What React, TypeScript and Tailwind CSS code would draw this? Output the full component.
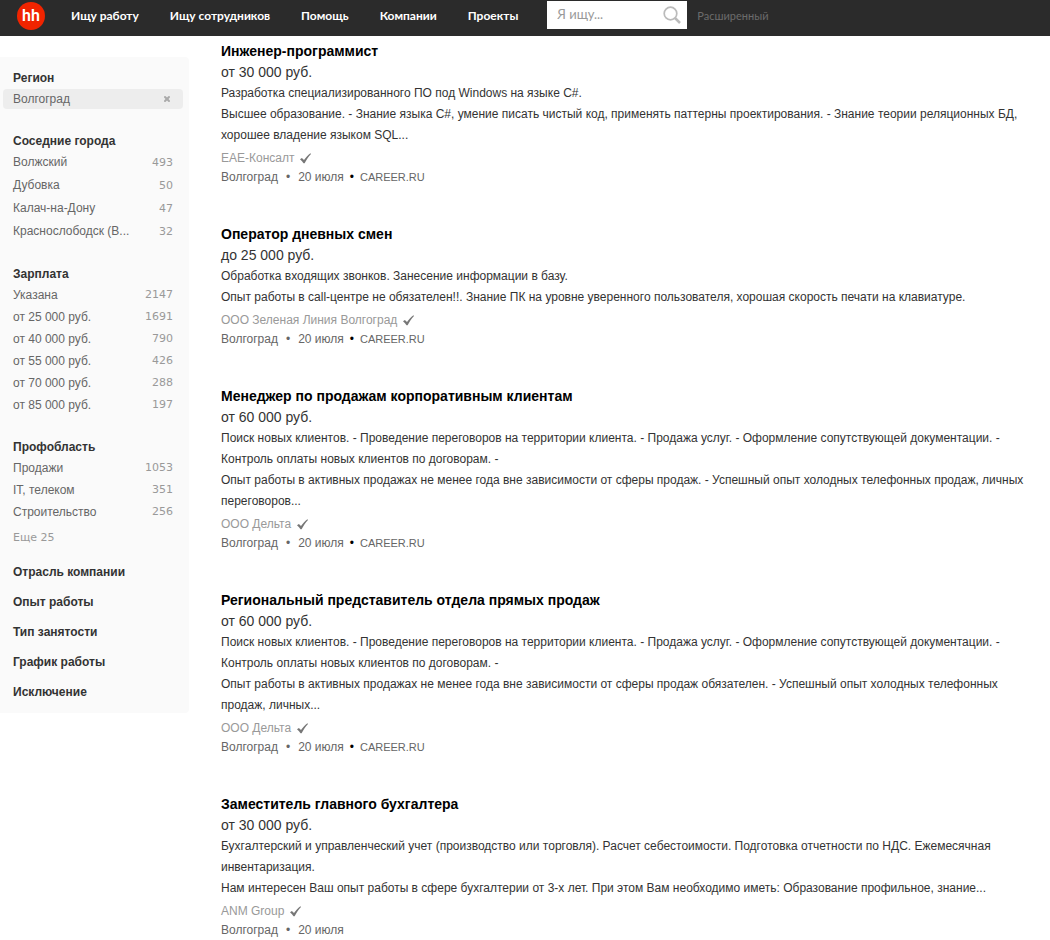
import { X } from "lucide-react";

type FilterRow = { label: string; count: number };

type Vacancy = {
  title: string;
  salary: string;
  duties: string;
  requirements: string;
  company: string;
  source?: string;
};

const navigation = [
  "Ищу работу",
  "Ищу сотрудников",
  "Помощь",
  "Компании",
  "Проекты",
];

const cities: FilterRow[] = [
  { label: "Волжский", count: 493 },
  { label: "Дубовка", count: 50 },
  { label: "Калач-на-Дону", count: 47 },
  { label: "Краснослободск (В...", count: 32 },
];

const salaries: FilterRow[] = [
  { label: "Указана", count: 2147 },
  { label: "от 25 000 руб.", count: 1691 },
  { label: "от 40 000 руб.", count: 790 },
  { label: "от 55 000 руб.", count: 426 },
  { label: "от 70 000 руб.", count: 288 },
  { label: "от 85 000 руб.", count: 197 },
];

const areas: FilterRow[] = [
  { label: "Продажи", count: 1053 },
  { label: "IT, телеком", count: 351 },
  { label: "Строительство", count: 256 },
];

const collapsed = [
  "Отрасль компании",
  "Опыт работы",
  "Тип занятости",
  "График работы",
  "Исключение",
];

const vacancies: Vacancy[] = [
  {
    title: "Инженер-программист",
    salary: "от 30 000 руб.",
    duties: "Разработка специализированного ПО под Windows на языке C#.",
    requirements:
      "Высшее образование. - Знание языка C#, умение писать чистый код, применять паттерны проектирования. - Знание теории реляционных БД, хорошее владение языком SQL...",
    company: "ЕАЕ-Консалт",
    source: "CAREER.RU",
  },
  {
    title: "Оператор дневных смен",
    salary: "до 25 000 руб.",
    duties: "Обработка входящих звонков. Занесение информации в базу.",
    requirements:
      "Опыт работы в call-центре не обязателен!!. Знание ПК на уровне уверенного пользователя, хорошая скорость печати на клавиатуре.",
    company: "ООО Зеленая Линия Волгоград",
    source: "CAREER.RU",
  },
  {
    title: "Менеджер по продажам корпоративным клиентам",
    salary: "от 60 000 руб.",
    duties:
      "Поиск новых клиентов. - Проведение переговоров на территории клиента. - Продажа услуг. - Оформление сопутствующей документации. - Контроль оплаты новых клиентов по договорам. -",
    requirements:
      "Опыт работы в активных продажах не менее года вне зависимости от сферы продаж. - Успешный опыт холодных телефонных продаж, личных переговоров...",
    company: "ООО Дельта",
    source: "CAREER.RU",
  },
  {
    title: "Региональный представитель отдела прямых продаж",
    salary: "от 60 000 руб.",
    duties:
      "Поиск новых клиентов. - Проведение переговоров на территории клиента. - Продажа услуг. - Оформление сопутствующей документации. - Контроль оплаты новых клиентов по договорам. -",
    requirements:
      "Опыт работы в активных продажах не менее года вне зависимости от сферы продаж обязателен. - Успешный опыт холодных телефонных продаж, личных...",
    company: "ООО Дельта",
    source: "CAREER.RU",
  },
  {
    title: "Заместитель главного бухгалтера",
    salary: "от 30 000 руб.",
    duties:
      "Бухгалтерский и управленческий учет (производство или торговля). Расчет себестоимости. Подготовка отчетности по НДС. Ежемесячная инвентаризация.",
    requirements:
      "Нам интересен Ваш опыт работы в сфере бухгалтерии от 3-х лет. При этом Вам необходимо иметь: Образование профильное, знание...",
    company: "ANM Group",
  },
];

function Header() {
  return (
    <header className="flex h-9 items-start bg-[#2b2b2b] pl-[17px] font-[Lato,sans-serif]">
      <a
        href="#"
        className="mt-0.5 mr-[26px] flex size-7 items-center justify-center rounded-full bg-[#f02400] font-[Roboto,sans-serif] text-base leading-7 font-semibold text-white"
      >
        hh
      </a>
      <nav className="mr-[29px] flex gap-[31px] text-xs leading-8 font-bold whitespace-nowrap text-white">
        {navigation.map((item) => (
          <a key={item} href="#">
            {item}
          </a>
        ))}
      </nav>
      <form className="mt-px flex h-7 w-[140px] items-center bg-white pr-1.5 pl-2.5">
        <input
          type="text"
          aria-label="Поиск"
          placeholder="Я ищу..."
          className="w-full min-w-0 text-[13px] outline-none placeholder:text-[#999]"
        />
        <button type="submit" aria-label="Найти">
          <svg
            viewBox="0 0 18 18"
            className="size-[18px] fill-none stroke-[#bbb]"
          >
            <circle cx="7.500" cy="7.500" r="6.300" strokeWidth="1.700" />
            <path d="M12 12 17 17" strokeWidth="2.500" />
          </svg>
        </button>
      </form>
      <a href="#" className="ml-2.5 text-[11px] leading-8 text-[#6b6b6b]">
        Расширенный
      </a>
    </header>
  );
}

function Heading({ children }: { children: string }) {
  return (
    <h3 className="px-2.5 leading-5 font-bold text-[#333]">{children}</h3>
  );
}

function Row({ label, count }: FilterRow) {
  return (
    <a href="#" className="flex justify-between px-2.5">
      <span>{label}</span>
      <span className="font-['DejaVu_Sans',sans-serif] text-[11px] text-[#999]">
        {count}
      </span>
    </a>
  );
}

function Sidebar() {
  return (
    <aside className="mt-[21px] w-[189px] shrink-0 rounded-r bg-[#fafafa] pt-[11px] pr-1.5 pb-1.5 pl-[3px] text-[#666]">
      <section className="mb-[22px]">
        <Heading>Регион</Heading>
        <div className="mt-px flex h-5 items-center justify-between rounded-sm bg-[#ededed] px-2.5">
          <span>Волгоград</span>
          <button type="button" aria-label="Убрать" className="mr-0.5 text-[#aaa]">
            <X size={8} strokeWidth={6} />
          </button>
        </div>
      </section>
      <section className="mb-[21px] leading-[23px]">
        <Heading>Соседние города</Heading>
        {cities.map((row) => (
          <Row key={row.label} {...row} />
        ))}
      </section>
      <section className="mb-[21px] leading-[22px]">
        <Heading>Зарплата</Heading>
        {salaries.map((row) => (
          <Row key={row.label} {...row} />
        ))}
      </section>
      <section className="mb-2 leading-[22px]">
        <Heading>Профобласть</Heading>
        {areas.map((row) => (
          <Row key={row.label} {...row} />
        ))}
        <button
          type="button"
          className="mt-1 block px-2.5 font-['DejaVu_Sans',sans-serif] text-[11px] text-[#999]"
        >
          Еще 25
        </button>
      </section>
      {collapsed.map((item) => (
        <button
          key={item}
          type="button"
          className="block px-2.5 leading-[30px] font-bold text-[#333]"
        >
          {item}
        </button>
      ))}
    </aside>
  );
}

function VacancyItem({ vacancy }: { vacancy: Vacancy }) {
  return (
    <article className="mb-[37px] leading-[21px] text-[#333]">
      <h2 className="text-sm leading-[21px] font-bold text-black">
        <a href="#">{vacancy.title}</a>
      </h2>
      <div className="text-sm leading-[21px]">{vacancy.salary}</div>
      <p>{vacancy.duties}</p>
      <p>{vacancy.requirements}</p>
      <div className="mt-[3px] flex items-center gap-1.5 leading-[19px] text-[#999]">
        <a href="#">{vacancy.company}</a>
        <svg viewBox="0 0 11 11" className="size-[11px] fill-[#777]">
          <path d="M0 6.300 1.900 4.900 4 7.100C5.700 4.600 7.800 2.200 10.400.3L11 .9C8.500 3.600 6.500 6.600 4.600 10.200L3.500 10.200C2.700 8.800 1.500 7.500 0 6.300Z" />
        </svg>
      </div>
      <div className="flex leading-[19px] text-[#666]">
        <span>Волгоград</span>
        <span className="mx-2">•</span>
        <span>20 июля</span>
        {vacancy.source ? (
          <>
            <span className="mx-1.5 text-black">•</span>
            <a href="#" className="text-[11px]">
              {vacancy.source}
            </a>
          </>
        ) : null}
      </div>
    </article>
  );
}

export default function App() {
  return (
    <div className="min-h-screen bg-white font-['Liberation_Sans',Arial,sans-serif] text-xs">
      <Header />
      <div className="flex items-start">
        <Sidebar />
        <main className="min-w-0 flex-1 pt-[5px] pr-5 pl-8">
          {vacancies.map((vacancy) => (
            <VacancyItem key={vacancy.title} vacancy={vacancy} />
          ))}
        </main>
      </div>
    </div>
  );
}
